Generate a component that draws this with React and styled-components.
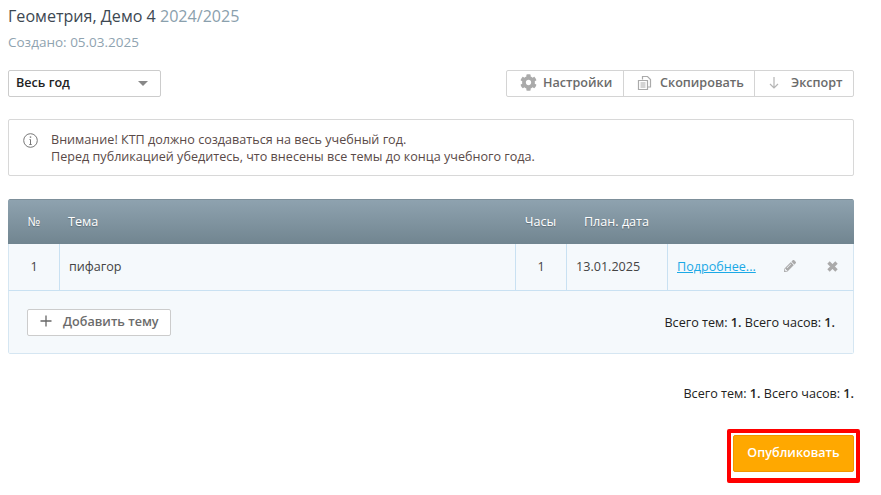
import styled, { createGlobalStyle } from "styled-components";
import { FaCog, FaPencilAlt } from "react-icons/fa";

const GlobalStyle = createGlobalStyle`
  html, body {
    margin: 0;
    padding: 0;
    background: #fff;
    font-family: "Open Sans", "Liberation Sans", sans-serif;
    font-size: 12.6px;
    color: #333;
  }
`;

const Page = styled.div`
  width: 846px;
  height: 495px;
  padding: 0 27px 0 8px;
  overflow: hidden;
`;

const Title = styled.h1`
  margin: 6px 0 0;
  font-size: 16.1px;
  line-height: 20px;
  font-weight: 400;
  color: #3d4852;
  span {
    color: #8aa0ad;
  }
`;

const Created = styled.div`
  margin-top: 7px;
  font-size: 13.5px;
  line-height: 18px;
  color: #8fa3b0;
`;

const Toolbar = styled.div`
  display: flex;
  justify-content: space-between;
  margin-top: 19px;
`;

const Select = styled.div`
  box-sizing: border-box;
  width: 153px;
  height: 27px;
  padding: 0 12px 2px 7px;
  display: flex;
  align-items: center;
  justify-content: space-between;
  border: 1px solid #ccc;
  border-radius: 2px;
  font-weight: 600;
  color: #222;
`;

const Caret = styled.i`
  width: 0;
  height: 0;
  margin-top: 2px;
  border-left: 5px solid transparent;
  border-right: 5px solid transparent;
  border-top: 5px solid #888;
`;

const ButtonGroup = styled.div`
  display: flex;
  height: 27px;
  box-sizing: border-box;
  border: 1px solid #d4d4d4;
  border-radius: 2px;
`;

const GroupButton = styled.div`
  box-sizing: border-box;
  width: ${(p) => p.$width}px;
  display: flex;
  align-items: center;
  gap: ${(p) => p.$gap}px;
  padding: 0 0 2px 13px;
  font-weight: 600;
  color: #6b6b6b;
  & + & {
    border-left: 1px solid #d4d4d4;
  }
`;

const Notice = styled.div`
  box-sizing: border-box;
  height: 57px;
  margin-top: 22px;
  padding: 11px 14px;
  display: flex;
  gap: 13px;
  border: 1px solid #d8d8d8;
  border-radius: 2px;
  line-height: 17px;
  color: #5a4a48;
  svg {
    margin-top: 2px;
    flex: none;
  }
`;

const Panel = styled.div`
  margin-top: 23px;
  border-radius: 2px;
  overflow: hidden;
`;

const columns = "50px 456px 51px 101px 1fr";

const HeadRow = styled.div`
  display: grid;
  grid-template-columns: ${columns};
  height: 45px;
  padding-bottom: 2px;
  align-items: center;
  background: linear-gradient(#8fa3b0, #718590);
  background-origin: border-box;
  border-top: 1px solid #7d8f9a;
  border-left: 1px solid transparent;
  border-right: 1px solid transparent;
  box-sizing: border-box;
  color: #fff;
  text-shadow: 0 1px 1px rgba(0, 0, 0, 0.25);
`;

const HeadCell = styled.div`
  text-align: ${(p) => (p.$center ? "center" : "left")};
  padding-left: ${(p) => p.$pad || 0}px;
`;

const BodyRow = styled.div`
  display: grid;
  grid-template-columns: ${columns};
  height: 47px;
  box-sizing: border-box;
  background: #f5f9fc;
  border-bottom: 1px solid #c9e1f2;
  border-left: 1px solid #d5e6f2;
  border-right: 1px solid #d5e6f2;
  color: #444;
`;

const Cell = styled.div`
  display: flex;
  align-items: center;
  justify-content: ${(p) => (p.$center ? "center" : "flex-start")};
  padding: 0 0 2px ${(p) => p.$pad || 0}px;
  & + & {
    border-left: 1px solid #c9e1f2;
  }
`;

const MoreLink = styled.a`
  color: #1ba9e6;
  text-decoration: underline;
`;

const RowIcons = styled.div`
  display: flex;
  align-items: center;
  margin-left: 28px;
  gap: 31px;
  color: #aaa;
`;

const PanelFooter = styled.div`
  box-sizing: border-box;
  height: 63px;
  padding: 0 18px;
  display: flex;
  align-items: center;
  justify-content: space-between;
  background: #f5f9fc;
  border: 1px solid #d5e6f2;
  border-top: 0;
  border-radius: 0 0 2px 2px;
`;

const AddButton = styled.div`
  box-sizing: border-box;
  width: 144px;
  height: 27px;
  display: flex;
  align-items: center;
  gap: 11px;
  padding: 0 0 2px 12px;
  background: #fff;
  border: 1px solid #ccc;
  border-radius: 2px;
  font-weight: 600;
  color: #6b6b6b;
`;

const Totals = styled.div`
  color: #222;
  b {
    font-weight: 600;
  }
`;

const GrandTotals = styled(Totals)`
  margin-top: 31px;
  text-align: right;
`;

const PublishRow = styled.div`
  display: flex;
  justify-content: flex-end;
  margin: 27px -6px 0 0;
`;

/* the red marker round the button */
const PublishFrame = styled.div`
  padding: 2px 2px 6px;
  border: 4px solid #f00;
  border-bottom-width: 5px;
  border-radius: 2px;
`;

const PublishButton = styled.div`
  box-sizing: border-box;
  width: 121px;
  height: 37px;
  padding-bottom: 2px;
  display: flex;
  align-items: center;
  justify-content: center;
  background: #ffa800;
  border: 1px solid #f29400;
  border-radius: 2px;
  font-weight: 600;
  color: #fff;
`;

const CopyIcon = () => (
  <svg width="16" height="16" viewBox="0 0 16 16" fill="none" stroke="#aaa" strokeWidth="1.2">
    <path d="M5.5 4.5V1.5h5l3 3v7.5h-3" />
    <path d="M1.5 5.5h9v9h-9z" />
    <path d="M3.5 8h5M3.5 10h5M3.5 12h5" />
  </svg>
);

const ArrowIcon = () => (
  <svg width="12" height="14" viewBox="0 0 12 14" fill="none" stroke="#b5b5b5" strokeWidth="1.2">
    <path d="M6 1v11M2 8l4 4 4-4" />
  </svg>
);

const InfoIcon = () => (
  <svg width="15" height="15" viewBox="0 0 15 15" fill="none" stroke="#777">
    <circle cx="7.5" cy="7.5" r="6.8" />
    <path d="M7.5 6.5v5M6.3 11.5h2.4M6.5 6.5h1" />
    <path d="M7.5 3.4v1.4" strokeWidth="1.4" />
  </svg>
);

const PlusIcon = () => (
  <svg width="12" height="12" viewBox="0 0 12 12" fill="none" stroke="#666" strokeWidth="1.3">
    <path d="M6 0.5v11M0.5 6h11" />
  </svg>
);

const CrossIcon = () => (
  <svg width="11" height="11" viewBox="0 0 11 11" fill="none" stroke="#aaa" strokeWidth="3.4">
    <path d="M1.5 1.5l8 8M9.5 1.5l-8 8" />
  </svg>
);

export default function App() {
  return (
    <Page>
      <GlobalStyle />
      <Title>
        Геометрия, Демо 4 <span>2024/2025</span>
      </Title>
      <Created>Создано: 05.03.2025</Created>

      <Toolbar>
        <Select>
          Весь год
          <Caret />
        </Select>
        <ButtonGroup>
          <GroupButton $width={116} $gap={6}>
            <FaCog size={17} color="#aaa" />
            Настройки
          </GroupButton>
          <GroupButton $width={131} $gap={7}>
            <CopyIcon />
            Скопировать
          </GroupButton>
          <GroupButton $width={99} $gap={11}>
            <ArrowIcon />
            Экспорт
          </GroupButton>
        </ButtonGroup>
      </Toolbar>

      <Notice>
        <InfoIcon />
        <div>
          Внимание! КТП должно создаваться на весь учебный год.
          <br />
          Перед публикацией убедитесь, что внесены все темы до конца учебного года.
        </div>
      </Notice>

      <Panel>
        <HeadRow>
          <HeadCell $center>№</HeadCell>
          <HeadCell $pad={9}>Тема</HeadCell>
          <HeadCell $center>Часы</HeadCell>
          <HeadCell $center>План. дата</HeadCell>
          <HeadCell />
        </HeadRow>
        <BodyRow>
          <Cell $center>1</Cell>
          <Cell $pad={9}>пифагор</Cell>
          <Cell $center>1</Cell>
          <Cell $pad={9}>13.01.2025</Cell>
          <Cell $pad={9}>
            <MoreLink href="#">Подробнее...</MoreLink>
            <RowIcons>
              <FaPencilAlt size={12} />
              <CrossIcon />
            </RowIcons>
          </Cell>
        </BodyRow>
        <PanelFooter>
          <AddButton>
            <PlusIcon />
            Добавить тему
          </AddButton>
          <Totals>
            Всего тем: <b>1.</b> Всего часов: <b>1.</b>
          </Totals>
        </PanelFooter>
      </Panel>

      <GrandTotals>
        Всего тем: <b>1.</b> Всего часов: <b>1.</b>
      </GrandTotals>

      <PublishRow>
        <PublishFrame>
          <PublishButton>Опубликовать</PublishButton>
        </PublishFrame>
      </PublishRow>
    </Page>
  );
}
